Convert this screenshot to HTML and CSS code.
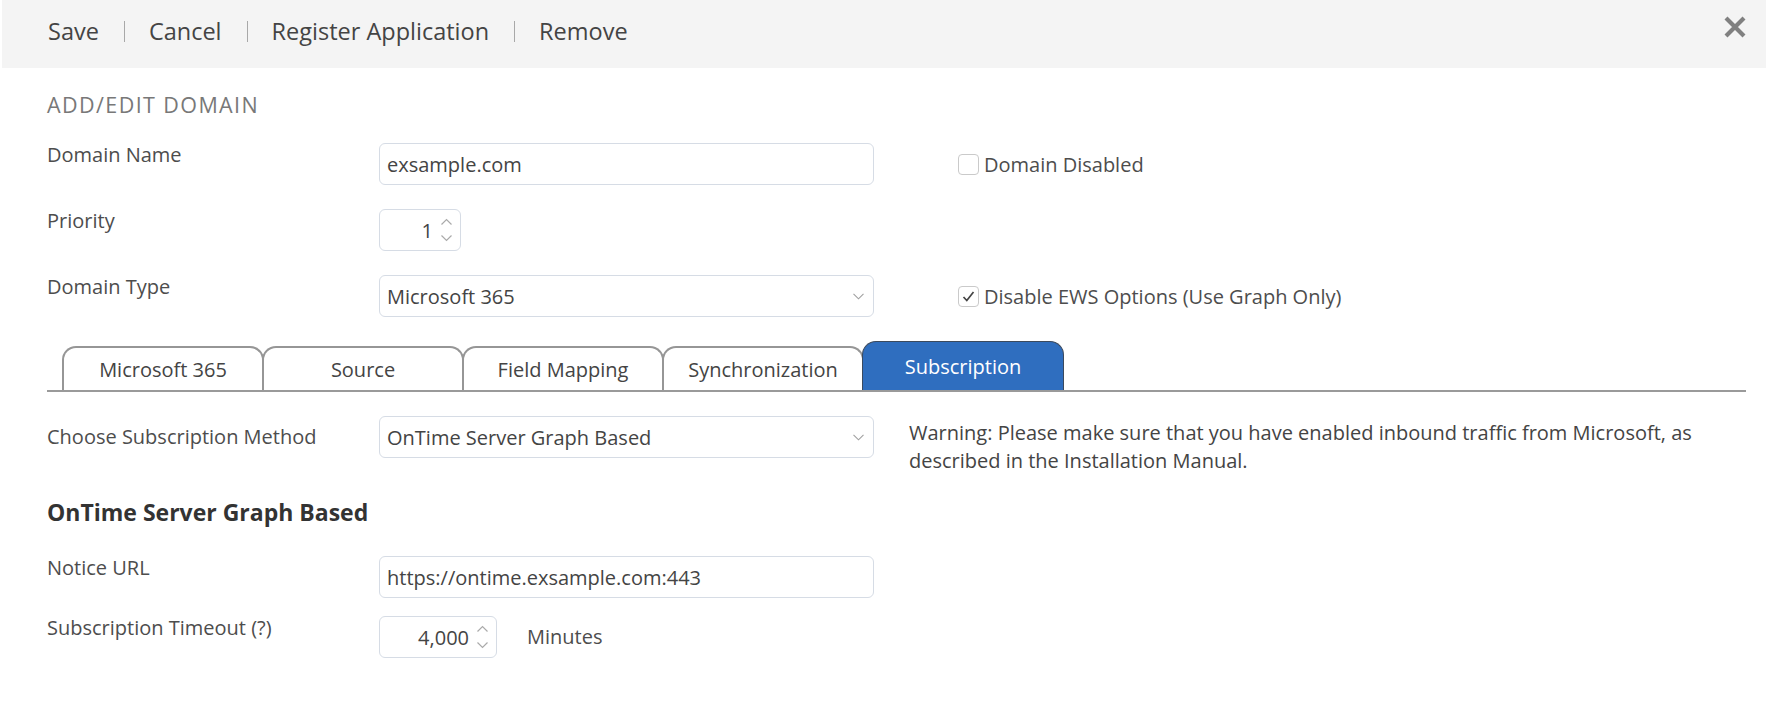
FILE: index.html
```html
<!DOCTYPE html>
<html lang="en">
<head>
<meta charset="utf-8">
<title>Add/Edit Domain</title>
<link rel="stylesheet" href="styles.css">
</head>
<body>
<div class="topbar">
  <span class="action">Save</span><span class="sep"></span>
  <span class="action">Cancel</span><span class="sep"></span>
  <span class="action">Register Application</span><span class="sep"></span>
  <span class="action">Remove</span>
  <svg class="close" width="24" height="24" viewBox="0 0 24 24"><path d="M3 3 L21 21 M21 3 L3 21" stroke="#808080" stroke-width="4.2" fill="none"/></svg>
</div>
<div class="content">
  <div class="title">ADD/EDIT DOMAIN</div>
  <div class="rows">
    <div class="row">
      <div class="label">Domain Name</div>
      <div class="field wide">exsample.com</div>
      <div class="check"><span class="box"></span>Domain Disabled</div>
    </div>
    <div class="row">
      <div class="label">Priority</div>
      <div class="field number n-small"><span>1</span><svg class="spin" width="13" height="24" viewBox="0 0 13 24"><path d="M1.5 6.5 L6.5 1.5 L11.5 6.5 M1.5 17.5 L6.5 22.5 L11.5 17.5" stroke="#aaa" stroke-width="1.2" fill="none"/></svg></div>
    </div>
    <div class="row">
      <div class="label">Domain Type</div>
      <div class="field wide select">Microsoft 365<svg width="11" height="7" viewBox="0 0 11 7"><path d="M0.5 0.8 L5.5 5.8 L10.5 0.8" stroke="#a0a0a0" stroke-width="1.1" fill="none"/></svg></div>
      <div class="check"><span class="box"><svg width="15" height="15" viewBox="0 0 15 15"><path d="M2.5 8 L5.8 11.5 L12.5 3" stroke="#444" stroke-width="1.7" fill="none"/></svg></span>Disable EWS Options (Use Graph Only)</div>
    </div>
  </div>
  <div class="tabs">
    <div class="tab">Microsoft 365</div>
    <div class="tab">Source</div>
    <div class="tab">Field Mapping</div>
    <div class="tab">Synchronization</div>
    <div class="tab active">Subscription</div>
  </div>
  <div class="row choose">
    <div class="label">Choose Subscription Method</div>
    <div class="field wide select">OnTime Server Graph Based<svg width="11" height="7" viewBox="0 0 11 7"><path d="M0.5 0.8 L5.5 5.8 L10.5 0.8" stroke="#a0a0a0" stroke-width="1.1" fill="none"/></svg></div>
    <div class="warning">Warning: Please make sure that you have enabled inbound traffic from Microsoft, as described in the Installation Manual.</div>
  </div>
  <h2 class="section">OnTime Server Graph Based</h2>
  <div class="rows tight">
    <div class="row">
      <div class="label">Notice URL</div>
      <div class="field wide">https://ontime.exsample.com:443</div>
    </div>
    <div class="row">
      <div class="label">Subscription Timeout (?)</div>
      <div class="field number n-large"><span>4,000</span><svg class="spin" width="13" height="24" viewBox="0 0 13 24"><path d="M1.5 6.5 L6.5 1.5 L11.5 6.5 M1.5 17.5 L6.5 22.5 L11.5 17.5" stroke="#aaa" stroke-width="1.2" fill="none"/></svg></div>
      <div class="unit">Minutes</div>
    </div>
  </div>
</div>
</body>
</html>
```
FILE: styles.css
```css
body {
  margin: 0;
  font-family: "Open Sans", "Liberation Sans", sans-serif;
  color: #4d4d4d;
  background: #fff;
}

.topbar {
  display: flex;
  align-items: center;
  height: 68px;
  box-sizing: border-box;
  padding: 0 19px 6px 46px;
  margin-left: 2px;
  background: #f4f4f4;
  font-size: 23.5px;
  color: #444;
}

.sep {
  width: 1px;
  height: 21px;
  background: #a8a8a8;
  margin: 0 24px 0 25px;
}

.close {
  margin-left: auto;
  align-self: flex-start;
  margin-top: 15px;
}

.content {
  padding: 23px 20px 0 47px;
}

.title {
  font-size: 21.5px;
  letter-spacing: 1.4px;
  line-height: 28px;
  color: #787878;
}

.rows {
  display: flex;
  flex-direction: column;
  gap: 24px;
  margin-top: 24px;
}

.rows.tight {
  gap: 18px;
  margin-top: 28px;
}

.row {
  display: flex;
  align-items: flex-start;
}

.label {
  width: 332px;
  flex: none;
  font-size: 20px;
  line-height: 24px;
}

.field {
  box-sizing: border-box;
  height: 42px;
  flex: none;
  border: 1px solid #d6dce5;
  border-radius: 6px;
  display: flex;
  align-items: center;
  font-size: 20px;
  color: #444;
  padding: 0 7px;
  background: #fff;
}

.field.wide {
  width: 495px;
}

.field.select {
  justify-content: space-between;
  padding-right: 9px;
}

.field.number {
  justify-content: flex-end;
  padding-right: 7px;
}

.n-small {
  width: 82px;
}

.n-large {
  width: 118px;
}

.spin {
  margin-left: 7px;
}

.check {
  margin-left: 84px;
  height: 42px;
  display: flex;
  align-items: center;
  font-size: 20px;
}

.box {
  width: 21px;
  height: 21px;
  box-sizing: border-box;
  border: 1px solid #cacaca;
  border-radius: 4px;
  margin-right: 5px;
  display: flex;
  align-items: center;
  justify-content: center;
}

.tabs {
  margin-top: 24px;
  display: flex;
  align-items: flex-end;
  height: 49px;
  border-bottom: 2px solid #9a9a9a;
  padding-left: 15px;
}

.tab {
  width: 202px;
  height: 44px;
  box-sizing: border-box;
  border: 2px solid #969696;
  border-bottom: none;
  border-radius: 14px 14px 0 0;
  display: flex;
  align-items: center;
  justify-content: center;
  font-size: 20px;
  color: #444;
  background: #fff;
}

.tab + .tab {
  margin-left: -2px;
}

.tab.active {
  height: 49px;
  background: #2f6ebf;
  color: #fff;
  border: 1px solid #3b4a5e;
  border-bottom: none;
}

.choose {
  margin-top: 24px;
}

.choose .label {
  line-height: 42px;
}

.warning {
  flex: 1;
  margin-left: 35px;
  margin-top: 3px;
  font-size: 20px;
  line-height: 28px;
  color: #444;
}

.section {
  margin: 21px 0 0;
  font-size: 23px;
  font-weight: 700;
  line-height: 32px;
  color: #333;
}

.unit {
  margin-left: 30px;
  font-size: 20px;
  line-height: 42px;
}
```
